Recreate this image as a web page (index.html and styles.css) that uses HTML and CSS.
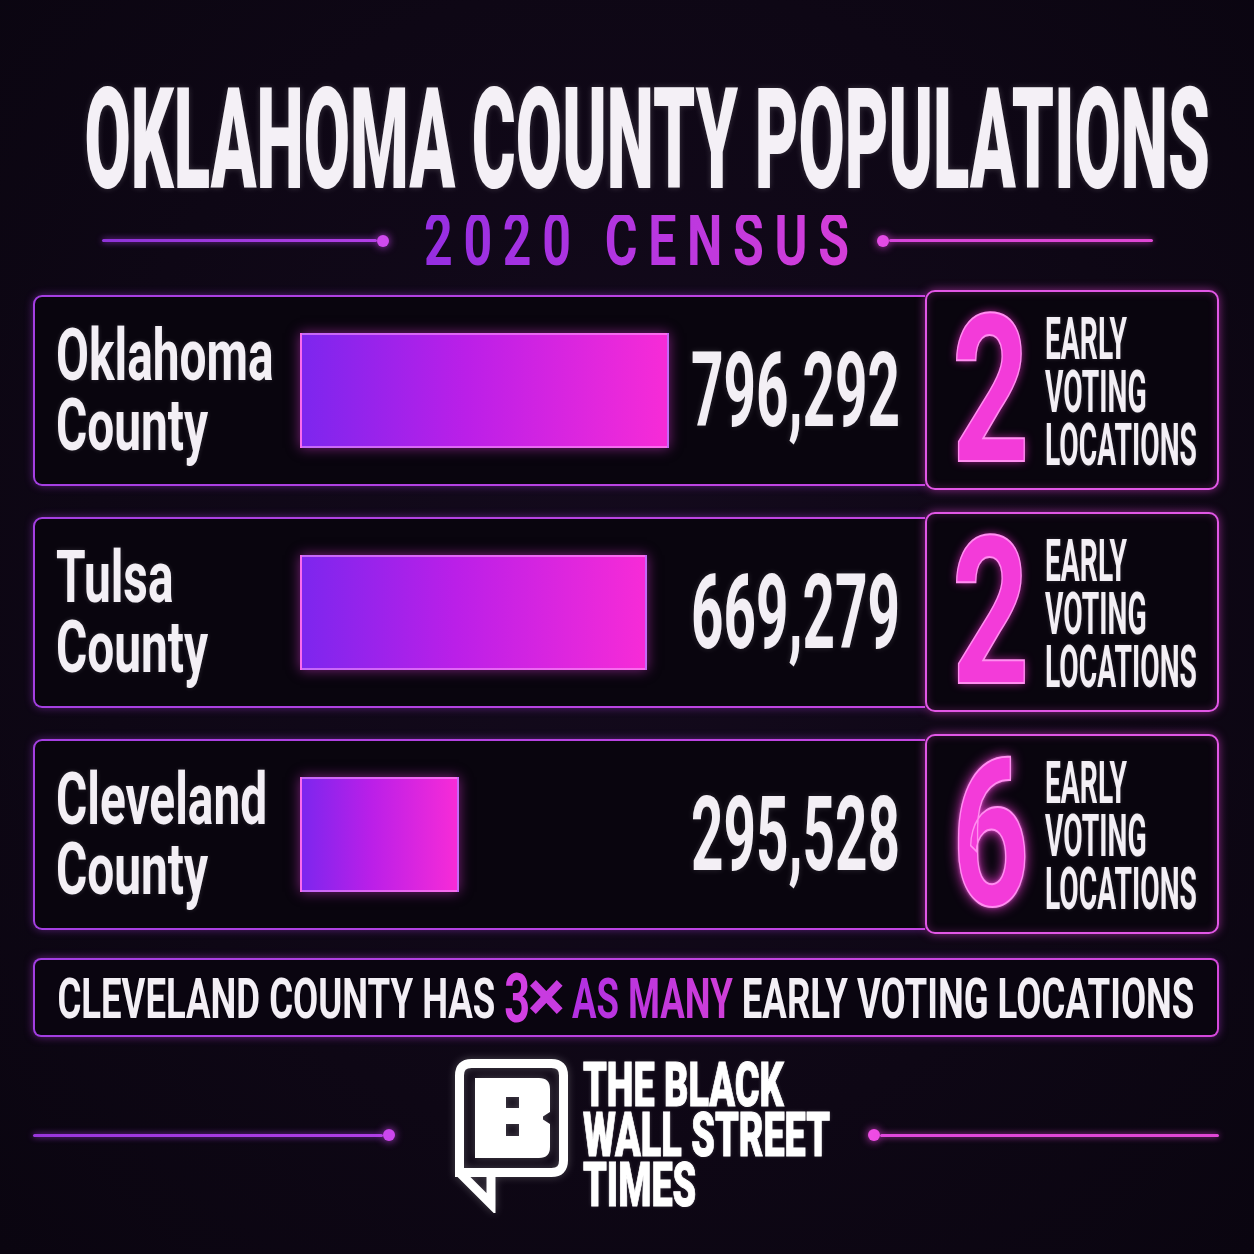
FILE: index.html
```html
<!DOCTYPE html>
<html lang="en">
<head>
<meta charset="utf-8">
<title>Oklahoma County Populations</title>
<link rel="stylesheet" href="styles.css">
</head>
<body>
<div class="page">
  <h1 class="title"><span class="title-fit">OKLAHOMA COUNTY POPULATIONS</span></h1>

  <div class="sub">
    <span class="sline sline-l"></span><span class="dot dot-l"></span>
    <div class="sub-text"><span class="sub-fit">2020 CENSUS</span></div>
    <span class="dot dot-r"></span><span class="sline sline-r"></span>
  </div>

  <section class="rows">
    <div class="row">
      <div class="main">
        <div class="label"><div><span class="lbl-fit">Oklahoma</span></div><div><span class="lbl-fit">County</span></div></div>
        <div class="bar" style="width:369px"></div>
        <div class="num"><span class="num-fit">796,292</span></div>
      </div>
      <div class="side">
        <div class="big"><span class="big-fit">2</span></div>
        <div class="ev"><div><span class="ev-fit">EARLY</span></div><div><span class="ev-fit">VOTING</span></div><div><span class="ev-fit">LOCATIONS</span></div></div>
      </div>
    </div>

    <div class="row">
      <div class="main">
        <div class="label"><div><span class="lbl-fit">Tulsa</span></div><div><span class="lbl-fit">County</span></div></div>
        <div class="bar" style="width:347px"></div>
        <div class="num"><span class="num-fit">669,279</span></div>
      </div>
      <div class="side">
        <div class="big"><span class="big-fit">2</span></div>
        <div class="ev"><div><span class="ev-fit">EARLY</span></div><div><span class="ev-fit">VOTING</span></div><div><span class="ev-fit">LOCATIONS</span></div></div>
      </div>
    </div>

    <div class="row">
      <div class="main">
        <div class="label"><div><span class="lbl-fit">Cleveland</span></div><div><span class="lbl-fit">County</span></div></div>
        <div class="bar" style="width:159px"></div>
        <div class="num"><span class="num-fit">295,528</span></div>
      </div>
      <div class="side">
        <div class="big"><span class="big-fit big-glow">6</span></div>
        <div class="ev"><div><span class="ev-fit">EARLY</span></div><div><span class="ev-fit">VOTING</span></div><div><span class="ev-fit">LOCATIONS</span></div></div>
      </div>
    </div>
  </section>

  <div class="banner"><span class="ban-fit">CLEVELAND COUNTY HAS <span class="three">3</span><span class="times">×</span> <span class="grad">AS MANY</span> EARLY VOTING LOCATIONS</span></div>

  <footer class="logo-row">
    <span class="lline lline-l"></span><span class="dot ldot-l"></span>
    <div class="logo">
      <svg class="logo-icon" viewBox="0 0 115 156" width="115" height="156" aria-hidden="true">
        <path d="M18.5 6.5H98.5Q110.5 6.5 110.5 18.5V103.5Q110.5 115.5 98.5 115.5H6.5V18.5Q6.5 6.5 18.5 6.5Z M6.5 115.5L38 147V115.5" fill="none" stroke="#ffffff" stroke-width="9" stroke-linejoin="miter"/>
        <path fill="#ffffff" fill-rule="evenodd" d="M22 21H86Q97 21 97 32V55L90 59.5V62.5L97 67V90Q97 101 86 101H22Z M53 40H66V51H53Z M53 67H66V79H53Z"/>
      </svg>
      <div class="logo-text"><div><span class="logo-fit">THE BLACK</span></div><div><span class="logo-fit">WALL STREET</span></div><div><span class="logo-fit">TIMES</span></div></div>
    </div>
    <span class="dot ldot-r"></span><span class="lline lline-r"></span>
  </footer>
</div>
</body>
</html>
```

FILE: styles.css
```css
html, body {
  margin: 0;
  padding: 0;
  width: 1254px;
  height: 1254px;
  overflow: hidden;
  background: #0f0816;
}

.page {
  width: 1254px;
  height: 1254px;
  overflow: hidden;
  font-family: Roboto, "Liberation Sans", "DejaVu Sans", sans-serif;
  color: #f3eff5;
  background: radial-gradient(ellipse at 50% 45%, #140a1d 0%, #0e0715 60%, #0a0510 100%);
}

/* ---------- title ---------- */
.title {
  margin: 90px 0 0;
  padding-left: 40px;
  height: 100px;
  display: flex;
  justify-content: center;
  font-size: 141px;
  line-height: 100px;
  font-weight: 900;
}

.title-fit {
  display: inline-block;
  flex: none;
  white-space: nowrap;
  transform: scaleX(0.476);
  transform-origin: center;
  color: #f4f0f6;
  text-shadow: 0 0 10px rgba(255, 255, 255, 0.18);
}

/* ---------- subtitle ---------- */
.sub {
  display: flex;
  align-items: center;
  height: 51px;
  margin-top: 25px;
  padding-left: 102px;
}

.sline {
  height: 3px;
  flex: none;
  border-radius: 2px;
}

.sline-l {
  width: 275px;
  background: linear-gradient(90deg, #8e33d8, #b23fe6);
  box-shadow: 0 0 6px rgba(170, 60, 230, 0.8);
}

.sline-r {
  width: 264px;
  background: linear-gradient(90deg, #d845dc, #e047d4);
  box-shadow: 0 0 6px rgba(225, 70, 215, 0.8);
}

.dot {
  width: 12px;
  height: 12px;
  border-radius: 50%;
  flex: none;
}

.dot-l {
  background: #d04aee;
  box-shadow: 0 0 8px rgba(200, 70, 235, 0.9);
}

.dot-r {
  background: #e44ce6;
  box-shadow: 0 0 8px rgba(230, 70, 225, 0.9);
}

.sub-text {
  width: 426px;
  flex: none;
  margin: 0 27px 0 35px;
  font-size: 72px;
  line-height: 51px;
  font-weight: 700;
}

.sub-fit {
  display: inline-block;
  white-space: nowrap;
  letter-spacing: 15.4px;
  transform: scaleX(0.695);
  transform-origin: left center;
  background: linear-gradient(90deg, #952ee2 0%, #b636e0 50%, #d63fd8 100%);
  -webkit-background-clip: text;
  background-clip: text;
  color: transparent;
}

/* ---------- rows ---------- */
.rows {
  margin-top: 24px;
  padding: 0 35px 0 33px;
  display: flex;
  flex-direction: column;
  gap: 22px;
}

.row {
  display: flex;
  align-items: center;
  height: 200px;
}

.main {
  flex: 1;
  min-width: 0;
  height: 191px;
  box-sizing: border-box;
  border: 2px solid transparent;
  border-right: 0;
  border-radius: 9px 0 0 9px;
  background:
    linear-gradient(#09050e, #09050e) padding-box,
    linear-gradient(90deg, #a43fe2, #c546e2) border-box;
  box-shadow: 0 0 8px rgba(170, 60, 230, 0.45);
  display: flex;
  align-items: center;
  padding-left: 21px;
  padding-right: 25px;
}

.label {
  width: 244px;
  flex: none;
  font-size: 73px;
  line-height: 70px;
  font-weight: 700;
}

.lbl-fit {
  display: inline-block;
  white-space: nowrap;
  transform: scaleX(0.655);
  transform-origin: left center;
  color: #f3eff5;
  text-shadow: 0 0 6px rgba(255, 255, 255, 0.15);
}

.bar {
  flex: none;
  height: 115px;
  box-sizing: border-box;
  border: 2px solid rgba(255, 160, 255, 0.55);
  background: linear-gradient(90deg, #7d26ee 0%, #bb1fe8 45%, #f72bd7 100%);
  box-shadow: 0 0 12px rgba(235, 60, 230, 0.5);
}

.num {
  flex: 1;
  min-width: 0;
  display: flex;
  justify-content: flex-end;
  font-size: 103px;
  line-height: 73px;
  font-weight: 700;
}

.num-fit {
  display: inline-block;
  flex: none;
  white-space: nowrap;
  transform: scaleX(0.55);
  transform-origin: right center;
  color: #f3eff5;
  text-shadow: 0 0 8px rgba(255, 255, 255, 0.15);
}

.side {
  width: 294px;
  flex: none;
  height: 200px;
  box-sizing: border-box;
  border: 2px solid #e257e6;
  border-radius: 10px;
  background: #09050e;
  box-shadow: 0 0 10px rgba(240, 70, 225, 0.55), inset 0 0 8px rgba(240, 70, 225, 0.25);
  display: flex;
  align-items: center;
  padding-left: 25px;
}

.big {
  width: 93px;
  flex: none;
  font-size: 206px;
  line-height: 146px;
  font-weight: 700;
  padding-top: 2px;
}

.big-fit {
  display: inline-block;
  transform: scaleX(0.655);
  transform-origin: left center;
  color: #f33bd9;
  -webkit-text-stroke: 2px #ff8ef0;
  text-shadow: 0 0 12px rgba(255, 50, 220, 0.7);
}

.big-glow {
  text-shadow: 0 0 16px rgba(255, 60, 225, 0.95), 0 0 4px rgba(255, 200, 250, 0.8);
}

.ev {
  min-width: 0;
  font-size: 60px;
  line-height: 53px;
  font-weight: 700;
  padding-top: 2px;
}

.ev-fit {
  display: inline-block;
  white-space: nowrap;
  transform: scaleX(0.47);
  transform-origin: left center;
  color: #f3eff5;
  text-shadow: 0 0 6px rgba(255, 255, 255, 0.15);
}

/* ---------- banner ---------- */
.banner {
  margin: 24px 35px 0 33px;
  height: 79px;
  box-sizing: border-box;
  border: 2px solid transparent;
  border-radius: 8px;
  background:
    linear-gradient(#0a0510, #0a0510) padding-box,
    linear-gradient(90deg, #a23ee2, #d548dc) border-box;
  box-shadow: 0 0 8px rgba(190, 60, 230, 0.5);
  display: flex;
  align-items: center;
  justify-content: center;
  font-size: 56px;
  line-height: 40px;
  font-weight: 700;
}

.ban-fit {
  display: inline-block;
  flex: none;
  white-space: nowrap;
  transform: scaleX(0.652);
  transform-origin: center;
  color: #f3eff5;
}

.three {
  font-size: 69px;
  color: #d23fe2;
  vertical-align: -4px;
}

.times {
  display: inline-block;
  font-size: 72px;
  margin: 0 6px;
  transform: scaleX(1.5);
  color: #c83be0;
  vertical-align: -3px;
}

.grad {
  background: linear-gradient(90deg, #b230e2, #d03fd8);
  -webkit-background-clip: text;
  background-clip: text;
  color: transparent;
}

/* ---------- logo ---------- */
.logo-row {
  display: flex;
  align-items: center;
  margin-top: 20px;
  height: 156px;
  padding: 0 35px 0 33px;
}

.lline {
  height: 3px;
  border-radius: 2px;
}

.lline-l {
  width: 350px;
  flex: none;
  background: linear-gradient(90deg, #9836dc, #b03fe6);
  box-shadow: 0 0 6px rgba(170, 60, 230, 0.8);
}

.lline-r {
  flex: 1;
  background: linear-gradient(90deg, #e048dc, #e047d4);
  box-shadow: 0 0 6px rgba(225, 70, 215, 0.8);
}

.ldot-l {
  background: #cc47ee;
  box-shadow: 0 0 8px rgba(200, 70, 235, 0.9);
}

.ldot-r {
  margin-left: 38px;
  background: #ee4ce4;
  box-shadow: 0 0 8px rgba(235, 70, 225, 0.9);
}

.logo {
  display: flex;
  align-items: center;
  gap: 15px;
  margin-left: 58px;
  flex: none;
}

.logo-icon {
  display: block;
  flex: none;
  filter: drop-shadow(0 0 4px rgba(255, 255, 255, 0.25));
}

.logo-text {
  width: 247px;
  flex: none;
  font-size: 62px;
  line-height: 50px;
  font-weight: 900;
}

.logo-fit {
  display: inline-block;
  white-space: nowrap;
  transform: scaleX(0.61);
  transform-origin: left center;
  color: #ffffff;
  -webkit-text-stroke: 1px #ffffff;
  text-shadow: 0 0 6px rgba(255, 255, 255, 0.2);
}
```
